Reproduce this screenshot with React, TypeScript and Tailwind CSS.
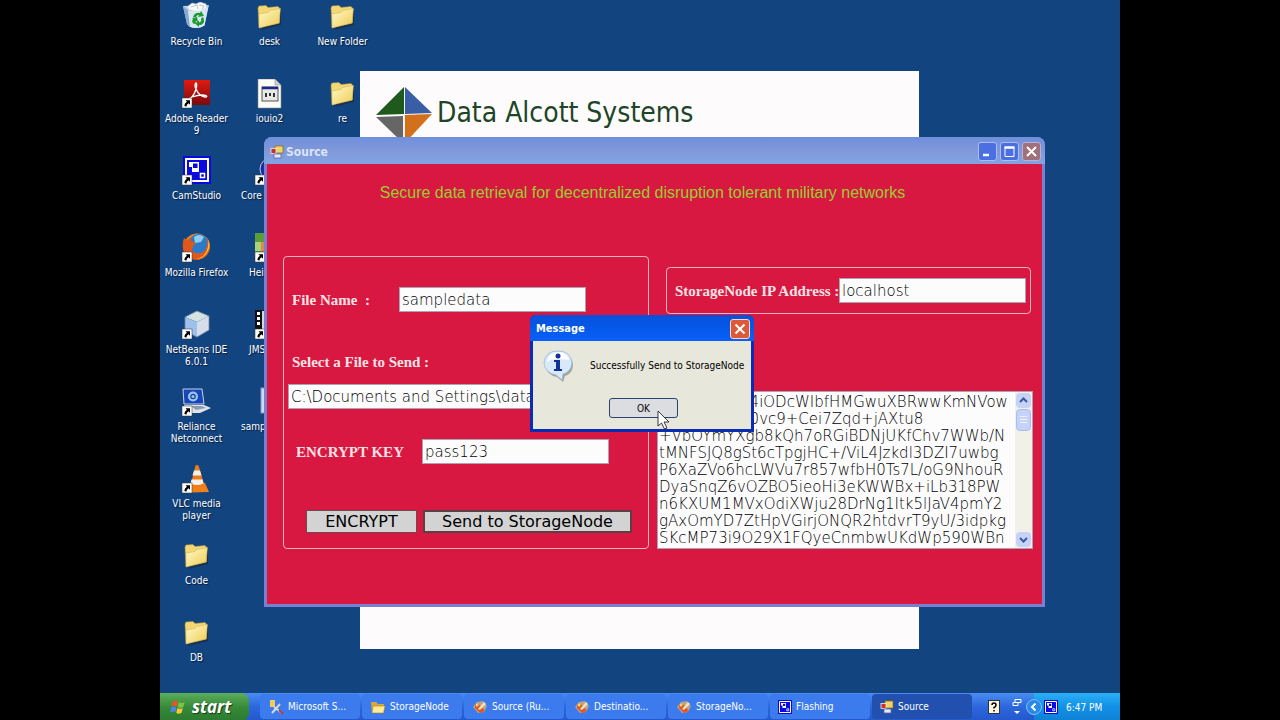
import { useState } from 'react';
import type { ReactNode } from 'react';

const UI_FONT = "font-['DejaVu_Sans_Condensed','DejaVu_Sans',sans-serif]";

function Shortcut() {
  return (
    <g>
      <rect x="1" y="19" width="10" height="10" fill="#fff" stroke="#333" strokeWidth=".5" />
      <path d="M4.500 21.200H9v4.600L7.500 24.300 Q5.500 25.500 5.300 27.800 L3.300 26.800 Q3.500 24 5.900 22.700Z" fill="#000" />
    </g>
  );
}

function FolderIcon() {
  return (
    <svg viewBox="0 0 30 30" className="h-[30px] w-[30px]">
      <defs>
        <linearGradient id="folder" x1="0" y1="0" x2="1" y2="1">
          <stop offset="0" stopColor="#fffbc8" />
          <stop offset="1" stopColor="#eecb55" />
        </linearGradient>
      </defs>
      <path d="M7 28L27 23V8L25 7Z" fill="#1b2a3a" opacity=".7" />
      <path d="M4 6l1-2 7-.5 2 2 10-1 1.500 1.500V21L5 25.500Z" fill="#f2d774" stroke="#b8963c" strokeWidth=".5" />
      <path d="M5 12l9-1.500L15.500 8.500 26.500 6.500 25 21 5 26Z" fill="url(#folder)" stroke="#cfae4e" strokeWidth=".5" />
    </svg>
  );
}

function RecycleIcon() {
  return (
    <svg viewBox="0 0 30 30" className="h-[30px] w-[30px]">
      <path d="M2 4L28 3 23.500 23.500Q16 28 8 24.500L6 22Z" fill="#b9d3ea" />
      <path d="M2 4l5 4 2 16.500L6 22Z" fill="#86a9cc" />
      <path d="M6 5l5-4 4 1 4-2 6 2 1 4-9 4-9-2Z" fill="#f7f9fa" stroke="#b9c4ce" strokeWidth=".6" />
      <path d="M10 5l6-2 1 4M18 3l5 1-2 3" fill="none" stroke="#a9b6c2" strokeWidth=".8" />
      <path d="M7 8.500q10 2 20-3L23.500 23.500Q16 28 9 24.500Z" fill="#dbe9f5" opacity=".9" />
      <path d="M12 15q2-5 7-4l1-2 3 5-6 1 1-2q-2-.5-3 2ZM22 15q3 5-2 8h-2v2l-4-3.500 4-3v2q3-1 2-4ZM13 22q-3-2-1-5l-1-1 5-1 1 5-2-1q-1 1 0 2Z" fill="#1d9a30" />
    </svg>
  );
}

function AdobeIcon() {
  return (
    <svg viewBox="0 0 30 30" className="h-[30px] w-[30px]">
      <defs>
        <linearGradient id="adobe" x1="0" y1="0" x2="0" y2="1">
          <stop offset="0" stopColor="#e01b10" />
          <stop offset="1" stopColor="#7c0a0c" />
        </linearGradient>
      </defs>
      <rect x="3" y="1" width="26" height="25" fill="url(#adobe)" />
      <path d="M15 4q-2 2 0 6 3 7 9 8 3 0 1-1.500-5-1.500-14 1.500-4 2-1 1 4-4 5.500-11 .5-4-.5-4Z" fill="none" stroke="#fff" strokeWidth="1.300" />
      <Shortcut />
    </svg>
  );
}

function DocIcon() {
  return (
    <svg viewBox="0 0 30 30" className="h-[30px] w-[30px]">
      <path d="M4 0h17l6 6v23H4Z" fill="#fdfdf8" stroke="#8a8a8a" strokeWidth=".6" />
      <path d="M21 0v6h6Z" fill="#cfd3da" stroke="#777" strokeWidth=".5" />
      <rect x="8" y="8" width="16" height="14" fill="#e8e8e4" stroke="#555" />
      <path d="M8 9h16" stroke="#1a2a8c" strokeWidth="2.500" />
      <path d="M11 14h2v4h-2ZM15 14h2v3h-2ZM19 14h2v4h-2Z" fill="#333" />
    </svg>
  );
}

function CamStudioIcon({ small }: { small?: boolean }) {
  return (
    <svg viewBox={small ? '2 0 28 28' : '0 0 30 30'} className={small ? 'h-[14px] w-[14px]' : 'h-[30px] w-[30px]'}>
      <rect x="2" y="0" width="28" height="28" fill="#0a0ae0" />
      <path d="M5 3h22v22H5Z" fill="none" stroke="#fff" strokeWidth="2" />
      <path d="M8 6h10v10H8Z" fill="#fff" />
      <path d="M12 7.500h4.500V12H12ZM8 11h3v5H8Z" fill="#0a0ae0" />
      <path d="M19.500 17.500h4v4h-4Z" fill="none" stroke="#fff" strokeWidth="1.500" />
      {!small && <Shortcut />}
    </svg>
  );
}

function FirefoxIcon() {
  return (
    <svg viewBox="0 0 30 30" className="h-[30px] w-[30px]">
      <circle cx="16" cy="13.500" r="13" fill="#f08a1c" />
      <circle cx="17.500" cy="11" r="10" fill="#2a7bc9" />
      <path d="M13 4q5-4 10 0l-3 5-6 1Z" fill="#8fd0f2" />
      <path d="M3 5l3 2 4-3 0 4 5 2-3 3-1 4q3 5 9 3 5-2 6-8 1-5-1-8 6 6 3 14-4 9-13 9Q3 26 2 16 1 10 3 5Z" fill="#e0571a" />
      <path d="M27 6q3 7 0 12-4 8-12 8 9-2 11-9 2-5 1-11Z" fill="#f9c63a" />
      <Shortcut />
    </svg>
  );
}

function NetBeansIcon() {
  return (
    <svg viewBox="0 0 30 30" className="h-[30px] w-[30px]">
      <path d="M4 7L16 1l12 5-12 6Z" fill="#d3e3e0" />
      <path d="M4 7l12 5v15L4 21Z" fill="#9ec0ec" />
      <path d="M28 6L16 12v15l12-7Z" fill="#d7dde9" />
      <path d="M4 7L16 1l12 5v14l-12 7L4 21Z" fill="none" stroke="#7287a6" strokeWidth=".8" />
      <Shortcut />
    </svg>
  );
}

function LaptopIcon() {
  return (
    <svg viewBox="0 0 30 30" className="h-[30px] w-[30px]">
      <path d="M2 2h19l2 15H3Z" fill="#1746b8" stroke="#c7d2e6" />
      <circle cx="12" cy="9.500" r="5" fill="#9cc4f2" />
      <circle cx="12" cy="9.500" r="2.200" fill="none" stroke="#1d3f92" strokeWidth="1.200" />
      <path d="M3 18h20l7 3-11 5H6Z" fill="#dfe3ea" />
      <path d="M10 19h11l4 2-10 2Z" fill="#8f9bb0" />
      <Shortcut />
    </svg>
  );
}

function ConeIcon() {
  return (
    <svg viewBox="0 0 30 30" className="h-[30px] w-[30px]">
      <path d="M6 20l18-1 4 9-18 .5Z" fill="#f0801a" />
      <path d="M14.500 1.500q1.500-1 3 0l6 20q-7 4-14 0Z" fill="#ef7a1a" />
      <path d="M13 6.500h6l1.500 5h-9ZM10.500 15.500h11l1 4q-6 3-13 0Z" fill="#f5f0ea" />
      <Shortcut />
    </svg>
  );
}

function CorelIcon() {
  return (
    <svg viewBox="0 0 30 30" className="h-[30px] w-[30px]">
      <circle cx="17" cy="13" r="11" fill="#1b2f9c" stroke="#b9c8ee" />
      <Shortcut />
    </svg>
  );
}

function HeiIcon() {
  return (
    <svg viewBox="0 0 30 30" className="h-[30px] w-[30px]">
      <rect x="1" y="0" width="26" height="20" fill="#5c9c3a" />
      <path d="M1 9h9v9H1Z" fill="#a8cf7a" />
      <path d="M7 9h6v9H7Z" fill="#dd8a3c" />
      <Shortcut />
    </svg>
  );
}

function FilmIcon() {
  return (
    <svg viewBox="0 0 30 30" className="h-[30px] w-[30px]">
      <rect x="1" y="0" width="26" height="28" fill="#111" />
      <path d="M3 2h3v3H3ZM3 7h3v3H3ZM3 12h3v3H3Z" fill="#fff" />
      <rect x="8" y="1" width="16" height="26" fill="#d4d7dc" />
      <Shortcut />
    </svg>
  );
}

function PaperIcon() {
  return (
    <svg viewBox="0 0 30 30" className="h-[30px] w-[30px]">
      <rect x="7" y="1" width="20" height="25" fill="#cfdcf4" stroke="#7e97cc" />
    </svg>
  );
}

function FormIcon() {
  return (
    <svg viewBox="0 0 14 14" className="h-[14px] w-[14px] shrink-0">
      <rect x="5" y="1" width="8" height="7" fill="#f3d565" stroke="#8a6d1c" strokeWidth=".8" />
      <rect x="1" y="3.500" width="5" height="5" fill="#c8322a" stroke="#eee" strokeWidth=".8" />
      <rect x="4" y="9" width="7" height="4" fill="#e8e8f2" stroke="#5068b0" strokeWidth=".8" />
    </svg>
  );
}

function ToolsIcon() {
  return (
    <svg viewBox="0 0 16 16" className="h-4 w-4 shrink-0">
      <path d="M2 1h5v7H2Z" fill="#f0cc58" />
      <path d="M4 14L12 5M6 8l8 6" stroke="#d5d9e2" strokeWidth="2" />
      <path d="M11 11l4 4" stroke="#b5402a" strokeWidth="2" />
    </svg>
  );
}

function TaskFolderIcon() {
  return (
    <svg viewBox="0 0 16 16" className="h-4 w-4 shrink-0">
      <path d="M1 3h5l2 2h6v9H2Z" fill="#dba93a" />
      <path d="M3 7h12l-1.500 7H2Z" fill="#fdeb9a" stroke="#a97f22" strokeWidth=".6" />
    </svg>
  );
}

function RuntimeIcon() {
  return (
    <svg viewBox="0 0 16 16" className="h-4 w-4 shrink-0">
      <path d="M1 8l4-5 6-1 4 5-3 6-6 1Z" fill="#b8a58a" />
      <path d="M3 5l5 1 5 6-5 2-5-5Z" fill="#e2552a" />
      <path d="M6 10l6-7 2 2-6 6Z" fill="#f5e2b0" />
      <circle cx="5" cy="6" r="1.500" fill="#f8d26a" />
    </svg>
  );
}

interface DesktopItem {
  label: string;
  icon: ReactNode;
  // items that run under a window keep their label flush to the left
  align?: string;
}

const columns: DesktopItem[][] = [
  [
    { label: 'Recycle Bin', icon: <RecycleIcon /> },
    { label: 'Adobe Reader 9', icon: <AdobeIcon /> },
    { label: 'CamStudio', icon: <CamStudioIcon /> },
    { label: 'Mozilla Firefox', icon: <FirefoxIcon /> },
    { label: 'NetBeans IDE 6.0.1', icon: <NetBeansIcon /> },
    { label: 'Reliance Netconnect', icon: <LaptopIcon /> },
    { label: 'VLC media player', icon: <ConeIcon /> },
    { label: 'Code', icon: <FolderIcon /> },
    { label: 'DB', icon: <FolderIcon /> },
  ],
  [
    { label: 'desk', icon: <FolderIcon /> },
    { label: 'iouio2', icon: <DocIcon /> },
    { label: 'Core', icon: <CorelIcon />, align: 'self-start pl-2' },
    { label: 'Hei', icon: <HeiIcon />, align: 'self-start pl-4' },
    { label: 'JMS', icon: <FilmIcon />, align: 'self-start pl-4' },
    { label: 'samp', icon: <PaperIcon />, align: 'self-start pl-2' },
  ],
  [
    { label: 'New Folder', icon: <FolderIcon /> },
    { label: 're', icon: <FolderIcon /> },
  ],
];

const cipherText = [
  '                   4iODcWIbfHMGwuXBRwwKmNVow',
  '                   0vc9+Cei7Zqd+jAXtu8',
  '+VbOYmYXgb8kQh7oRGiBDNjUKfChv7WWb/N',
  'tMNFSJQ8gSt6cTpgjHC+/ViL4Jzkdl3DZI7uwbg',
  'P6XaZVo6hcLWVu7r857wfbH0Ts7L/oG9NhouR',
  'DyaSnqZ6vOZBO5ieoHi3eKWWBx+iLb318PW',
  'n6KXUM1MVxOdiXWju28DrNg1Itk5lJaV4pmY2',
  'gAxOmYD7ZtHpVGirjONQR2htdvrT9yU/3idpkg',
  'SKcMP73i9O29X1FQyeCnmbwUKdWp590WBn',
].join('\n');

const tasks = [
  { label: 'Microsoft S...', icon: <ToolsIcon /> },
  { label: 'StorageNode', icon: <TaskFolderIcon /> },
  { label: 'Source (Ru...', icon: <RuntimeIcon /> },
  { label: 'Destinatio...', icon: <RuntimeIcon /> },
  { label: 'StorageNo...', icon: <RuntimeIcon /> },
  { label: 'Flashing', icon: <CamStudioIcon small /> },
  { label: 'Source', icon: <FormIcon />, active: true },
];

const inputStyle =
  "h-[25px] border border-[#a9a3b5] bg-[#fdfcfd] px-0.5 text-[15px] font-extralight text-black outline-none font-['DejaVu_Sans',sans-serif]";
const labelStyle = "text-[15px] leading-5 font-bold text-[#fbe3e6] whitespace-pre font-['Liberation_Serif',serif]";

function SourceWindow() {
  const [fileName, setFileName] = useState('sampledata');
  const [path, setPath] = useState('C:\\Documents and Settings\\data');
  const [key, setKey] = useState('pass123');
  const [host, setHost] = useState('localhost');

  return (
    <section className="absolute left-[104px] top-[137px] flex h-[470px] w-[781px] flex-col rounded-t-lg bg-[#7b7fd0] px-[3px] pb-[3px]">
      <header className="-mx-[3px] flex h-[27px] items-center rounded-t-lg bg-linear-to-b from-[#6f8fdc] via-[#8098d8] to-[#82a4e4] px-1 pt-0.5">
        <span className="pl-[2px]"><FormIcon /></span>
        <h2 className="flex-1 pl-0.5 text-[12px] font-bold text-[#dbe4fa]">Source</h2>
        <div className="flex gap-[3px]">
          <button aria-label="Minimize" className="h-[19px] w-[19px] rounded-[3px] border border-[#aebcf0] bg-[#4a6fe0]">
            <svg viewBox="0 0 17 17"><path d="M4 12h6" stroke="#fff" strokeWidth="2.500" /></svg>
          </button>
          <button aria-label="Maximize" className="h-[19px] w-[19px] rounded-[3px] border border-[#aebcf0] bg-[#4a6fe0]">
            <svg viewBox="0 0 17 17"><path d="M4 4.500h9v9H4Z" fill="none" stroke="#fff" /><path d="M3.500 4.500h10" stroke="#fff" strokeWidth="2.500" /></svg>
          </button>
          <button aria-label="Close" className="h-[19px] w-[19px] rounded-[3px] border border-[#b9b0d8] bg-[#a0707c]">
            <svg viewBox="0 0 17 17"><path d="M4 4l9 9M13 4l-9 9" stroke="#fff" strokeWidth="2" /></svg>
          </button>
        </div>
      </header>

      <div className="flex flex-1 flex-col bg-[#d81840]">
        <h1 className="h-[92px] pr-6 pt-[19px] text-center font-['Liberation_Sans',sans-serif] text-base leading-5 text-[#9acd32]">
          Secure data retrieval for decentralized disruption tolerant military networks
        </h1>

        <div className="flex h-[293px] gap-2 pl-4 pr-[9px]">
          <fieldset className="flex w-[366px] flex-col rounded border border-[#f3b3bd] pt-[30px]">
            <div className="flex items-center pl-2">
              <label htmlFor="fileName" className={`${labelStyle} w-[107px]`}>File Name  :</label>
              <input id="fileName" value={fileName} onChange={(e) => setFileName(e.target.value)} className={`${inputStyle} w-[187px]`} />
            </div>
            <label htmlFor="path" className={`${labelStyle} mt-10 pl-2`}>Select a File to Send :</label>
            <input id="path" value={path} onChange={(e) => setPath(e.target.value)} className={`${inputStyle} ml-1 mt-3 w-[300px]`} />
            <div className="mt-[30px] flex items-center pl-3">
              <label htmlFor="key" className={`${labelStyle} w-[126px]`}>ENCRYPT KEY</label>
              <input id="key" value={key} onChange={(e) => setKey(e.target.value)} className={`${inputStyle} w-[187px]`} />
            </div>
            <div className="mt-[46px] flex gap-1.5 pl-[22px] font-['DejaVu_Sans',sans-serif] text-base leading-5 text-black">
              <button className="h-[23px] w-[111px] border border-[#6b4a50] bg-[#d3d3d3]">ENCRYPT</button>
              <button className="h-[23px] w-[209px] border-2 border-[#5a4046] bg-[#d3d3d3]">Send to StorageNode</button>
            </div>
          </fieldset>

          <div className="flex flex-1 flex-col justify-between pt-[11px]">
            <div className="ml-[9px] mr-[2px] flex h-[47px] items-center rounded border border-[#f3b3bd] pl-2">
              <label htmlFor="host" className={`${labelStyle} w-[164px]`}>StorageNode IP Address :</label>
              <input id="host" value={host} onChange={(e) => setHost(e.target.value)} className={`${inputStyle} w-[187px]`} />
            </div>
            <div className="flex h-[158px] border border-[#a9a3b5] bg-[#fdfcfd]">
              <textarea
                aria-label="Encrypted data"
                readOnly
                defaultValue={cipherText}
                className="flex-1 resize-none overflow-hidden whitespace-pre pl-px pt-[2px] font-['DejaVu_Sans',sans-serif] text-[15px] font-extralight leading-[17px] text-black outline-none"
              />
              <div className="flex w-[17px] flex-col bg-[#f1f1ea] p-px">
                <button aria-label="Scroll up" className="h-[15px] rounded-sm bg-[#c5d3f8]">
                  <svg viewBox="0 0 15 15"><path d="M4 9l3.500-3.500L11 9" fill="none" stroke="#42589c" strokeWidth="2" /></svg>
                </button>
                <div className="mt-px h-[22px] rounded-sm border border-[#aabdf0] bg-[#c5d3f8]">
                  <svg viewBox="0 0 13 20"><path d="M3 6.500h7M3 9.500h7M3 12.500h7" stroke="#eef3ff" /></svg>
                </div>
                <button aria-label="Scroll down" className="mt-auto h-[15px] rounded-sm bg-[#c5d3f8]">
                  <svg viewBox="0 0 15 15"><path d="M4 6l3.500 3.500L11 6" fill="none" stroke="#42589c" strokeWidth="2" /></svg>
                </button>
              </div>
            </div>
          </div>
        </div>
      </div>
    </section>
  );
}

function MessageDialog() {
  return (
    <section role="dialog" aria-labelledby="msgTitle" className="absolute left-[370px] top-[315px] flex h-[117px] w-[224px] flex-col rounded-t-md bg-[#0a2cb4] px-[3px] pb-[3px]">
      <header className="-mx-[3px] flex h-[26px] items-center justify-between rounded-t-md bg-linear-to-b from-[#0a50d8] via-[#0458ea] to-[#0a60f8] pl-1.5 pr-1 pt-0.5">
        <h2 id="msgTitle" className="text-[11px] font-bold text-white">Message</h2>
        <button aria-label="Close" className="h-5 w-5 rounded-[3px] border border-[#f3d8d0] bg-[#dc5a3a]">
          <svg viewBox="0 0 18 18"><path d="M4.500 4.500l9 9M13.500 4.500l-9 9" stroke="#fff" strokeWidth="2" /></svg>
        </button>
      </header>
      <div className="flex flex-1 flex-col bg-[#e8e7dc]">
        <div className="flex items-start pl-2.5 pt-[9px]">
          <svg viewBox="0 0 32 32" className="h-8 w-8 shrink-0">
            <path d="M16 3q14 1 14 13-1 8-8 10l-2 6-6-5Q3 25 3 15 4 4 16 3Z" fill="#8a8a84" opacity=".7" />
            <path d="M15 1q13 0 14 12-1 9-9 11l-1 6-6-5Q2 23 1 13 2 1 15 1Z" fill="#d8e9fb" stroke="#8fb0d8" strokeWidth=".7" />
            <path d="M15 2Q5 3 4 12q6-5 22-2-2-8-11-8Z" fill="#fff" />
            <circle cx="15" cy="6" r="2.500" fill="#12309a" />
            <path d="M11 10h6v9h2v2h-8v-2h2v-7h-2Z" fill="#12309a" />
          </svg>
          <p className="whitespace-nowrap pl-[15px] pt-2 text-[10px] leading-4 text-black">Successfully Send to StorageNode</p>
        </div>
        <button className="ml-[76px] mt-4 h-5 w-[69px] rounded-[3px] border border-[#2a4470] bg-[#dcdde0] text-[10px] text-black">OK</button>
      </div>
    </section>
  );
}

export default function App() {
  return (
    <div className="flex min-h-screen justify-center bg-black">
      <main className={`flex w-3/4 flex-col overflow-hidden bg-[#124480] ${UI_FONT}`}>
        <div className="relative flex flex-1">
          {columns.map((items, i) => (
            <ul key={i} className="flex w-[73px] flex-col">
              {items.map((item) => (
                <li key={item.label} className="flex h-[77px] flex-col items-center pt-0.5">
                  <span className="pr-0.5">{item.icon}</span>
                  <span className={`mt-1 px-1 text-center text-[10px] leading-3 text-white [text-shadow:1px_1px_1px_#0a1c3c] ${item.align ?? ''}`}>
                    {item.label}
                  </span>
                </li>
              ))}
            </ul>
          ))}

          <section className="absolute left-[200px] top-[71px] h-[578px] w-[559px] bg-[#fdfbfc]">
            <div className="flex items-start pl-4 pt-4">
              <svg viewBox="0 0 58 58" className="h-14 w-14 shrink-0">
                <path d="M29 0v28L0 29Z" fill="#1f5a1c" />
                <path d="M30 0v28l28-1Z" fill="#3a5ea6" />
                <path d="M0 31l28-1v28Z" fill="#666" />
                <path d="M30 29l28-1-28 30Z" fill="#d2701c" />
              </svg>
              <h1 className="whitespace-nowrap pl-[5px] pt-1 text-[28px] leading-[44px] text-[#1d4526]">Data Alcott Systems</h1>
            </div>
          </section>

          <SourceWindow />
          <MessageDialog />

          <svg viewBox="0 0 14 20" className="absolute left-[497px] top-[410px] h-5 w-[14px]">
            <path d="M1 1v15l3.500-3 3 6 2.500-1-3-6H12Z" fill="#fff" stroke="#222" strokeWidth=".9" />
          </svg>
        </div>

        <nav className="flex h-7 items-stretch bg-linear-to-b from-[#4a8cf2] via-[#2c66dc] to-[#2458cc] text-white">
          <button className="flex w-[89px] items-center gap-1.5 rounded-r-lg bg-linear-to-b from-[#5cae5c] via-[#368a38] to-[#2c7a30] pl-2.5 font-['Open_Sans',sans-serif] text-[17px] font-bold italic leading-5 [text-shadow:1px_1px_1px_#1a3a1a]">
            <svg viewBox="0 0 18 18" className="h-4 w-4">
              <path d="M3 3q3-2 6 0L7.500 8.500q-3-2-6 0Z" fill="#e8552a" />
              <path d="M10 3.500q3 2 6.500 0L15 9q-3 2-6.500 0Z" fill="#7cc242" />
              <path d="M1.300 9.500q3-2 6 0L6 15q-3-2-6 0Z" fill="#4a86e8" />
              <path d="M8.500 10q3 2 6 0L13 15.500q-3 2-6 0Z" fill="#f8c832" />
            </svg>
            start
          </button>
          <div className="flex min-w-0 flex-1 gap-0.5 pl-[11px]">
            {tasks.map((task, i) => (
              <button
                key={i}
                className={`mb-0.5 mt-px flex w-[100px] items-center gap-1 overflow-hidden whitespace-nowrap rounded-sm pl-2 text-[10px] ${
                  task.active ? 'bg-[#2150ae]' : 'bg-[#3b7bee]'
                }`}
              >
                {task.icon}
                {task.label}
              </button>
            ))}
          </div>
          <div className="flex items-center gap-3 pr-3">
            <svg viewBox="0 0 12 14" className="h-[14px] w-3">
              <rect x=".5" y=".5" width="11" height="13" fill="#fdf9e0" stroke="#333" />
              <path d="M4 5q0-2 2-2t2 2-2 2.500v1M6 10v1.500" fill="none" stroke="#000" strokeWidth="1.500" />
            </svg>
            <svg viewBox="0 0 10 18" className="h-[18px] w-2.5">
              <path d="M3 1.500h6v3H3ZM1 4.500h5v3H1Z" fill="none" stroke="#fff" />
              <path d="M2 13h6l-3 3Z" fill="#fff" />
            </svg>
          </div>
          <div className="flex w-[86px] items-center bg-linear-to-b from-[#2ab0f6] via-[#1290e6] to-[#1080d4] text-[10px]">
            <button aria-label="Show hidden icons" className="-ml-2 mr-0.5 h-4 w-4 rounded-full bg-[#1a70d8]">
              <svg viewBox="0 0 16 16"><circle cx="8" cy="8" r="7.500" fill="#2a88e8" stroke="#7cc4fa" /><path d="M9.500 4.500L6 8l3.500 3.500" fill="none" stroke="#fff" strokeWidth="2" /></svg>
            </button>
            <CamStudioIcon small />
            <span className="whitespace-nowrap pl-2">6:47 PM</span>
          </div>
        </nav>
      </main>
    </div>
  );
}
